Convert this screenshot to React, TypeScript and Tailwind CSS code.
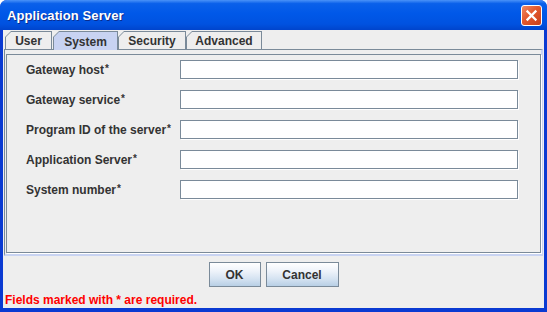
import React from "react";

const tabs = [
  { label: "User", w: "w-[47px]", ml: "ml-[2px]" },
  { label: "System", w: "w-[65px]", ml: "ml-[1px]", selected: true },
  { label: "Security", w: "w-[68px]", ml: "ml-0" },
  { label: "Advanced", w: "w-[76px]", ml: "ml-0" },
];

const fields = [
  "Gateway host",
  "Gateway service",
  "Program ID of the server",
  "Application Server",
  "System number",
];

function Tab({ label, w, ml, selected }: { label: string; w: string; ml: string; selected?: boolean }) {
  return (
    <div
      className={`relative ${w} ${ml} ${selected ? "h-[19px] z-10" : "h-[18px]"} bg-[#7a8a99] [clip-path:polygon(6px_0,100%_0,100%_100%,0_100%,0_6px)]`}
    >
      <div
        className={`absolute left-[1px] top-[1px] right-[1px] bottom-0 ${selected ? "bg-[#c8d3f2]" : "bg-[#eeeeee]"} [clip-path:polygon(5px_0,100%_0,100%_100%,0_100%,0_5px)] flex items-center justify-center pt-[1px]`}
      >
        <span className="text-[12px] font-bold text-[#333333] leading-none">{label}</span>
      </div>
    </div>
  );
}

export default function App() {
  return (
    <div className="w-[547px] h-[312px] font-['Liberation_Sans',Arial,sans-serif] bg-white">
      <div className="w-[547px] h-[312px] flex flex-col bg-[#0a3ad2] rounded-t-[7px] overflow-hidden">
        {/* Title bar */}
        <div className="h-[30px] shrink-0 flex items-center pl-[7px] pr-[5px] bg-[linear-gradient(to_bottom,#4a92f8_0%,#0a60ea_12%,#0058e8_45%,#0052e0_80%,#0044cc_100%)]">
          <span className="text-white font-bold text-[13px] leading-none [text-shadow:1px_1px_0_#0b2b8c] tracking-[0.1px]">
            Application Server
          </span>
          <div className="ml-auto w-[21px] h-[21px] rounded-[3px] border border-white bg-[linear-gradient(135deg,#ef8a64_0%,#e2582d_45%,#c9401a_100%)] flex items-center justify-center">
            <svg width="13" height="13" viewBox="0 0 13 13">
              <path d="M2.5 2.5 L10.5 10.5 M10.5 2.5 L2.5 10.5" stroke="white" strokeWidth="2.3" strokeLinecap="square" />
            </svg>
          </div>
        </div>
        {/* Body */}
        <div className="flex-1 mx-[3px] mb-[4px] bg-[#eeeeee] flex flex-col">
          {/* Tabs */}
          <div className="flex items-start pt-[1px] h-[19px] shrink-0">
            {tabs.map((t) => (
              <Tab key={t.label} {...t} />
            ))}
          </div>
          {/* Content */}
          <div className="mx-[1px] h-[207px] shrink-0 border-t border-l border-t-[#7a8a99] border-l-[#7a8a99] border-r-2 border-b-2 border-r-[#c8d3f2] border-b-[#c8d3f2] pt-[4px] pl-[1px] pr-0 pb-[1px] flex">
            <div className="flex-1 border border-[#7a8a99] shadow-[1px_1px_0_#ffffff] pt-[5px] pl-[19px] flex flex-col gap-[11px]">
              {fields.map((f) => (
                <div key={f} className="flex items-center h-[19px]">
                  <div className="w-[154px] text-[12px] font-bold text-[#333333] leading-none">
                    {f}
                    <span className="relative top-[-2px] ml-[1px] text-[10px]">*</span>
                  </div>
                  <div className="w-[338px] h-[19px] bg-white border border-[#7a8a99] shadow-[1px_1px_0_#ffffff]" />
                </div>
              ))}
            </div>
          </div>
          {/* Buttons */}
          <div className="flex justify-center gap-[5px] mt-[6px] h-[25px] shrink-0">
            <button className="w-[52px] h-[25px] border border-[#7a8a99] bg-[linear-gradient(to_bottom,#ffffff_0%,#eef3fa_35%,#d4e2f1_70%,#b8cfe5_100%)] text-[12px] font-bold text-[#333333]">
              OK
            </button>
            <button className="w-[73px] h-[25px] border border-[#7a8a99] bg-[linear-gradient(to_bottom,#ffffff_0%,#eef3fa_35%,#d4e2f1_70%,#b8cfe5_100%)] text-[12px] font-bold text-[#333333]">
              Cancel
            </button>
          </div>
          <div className="mt-[6px] pl-[2px] text-[12px] font-bold text-[#ff0000] leading-[14px]">
            Fields marked with * are required.
          </div>
        </div>
      </div>
    </div>
  );
}
